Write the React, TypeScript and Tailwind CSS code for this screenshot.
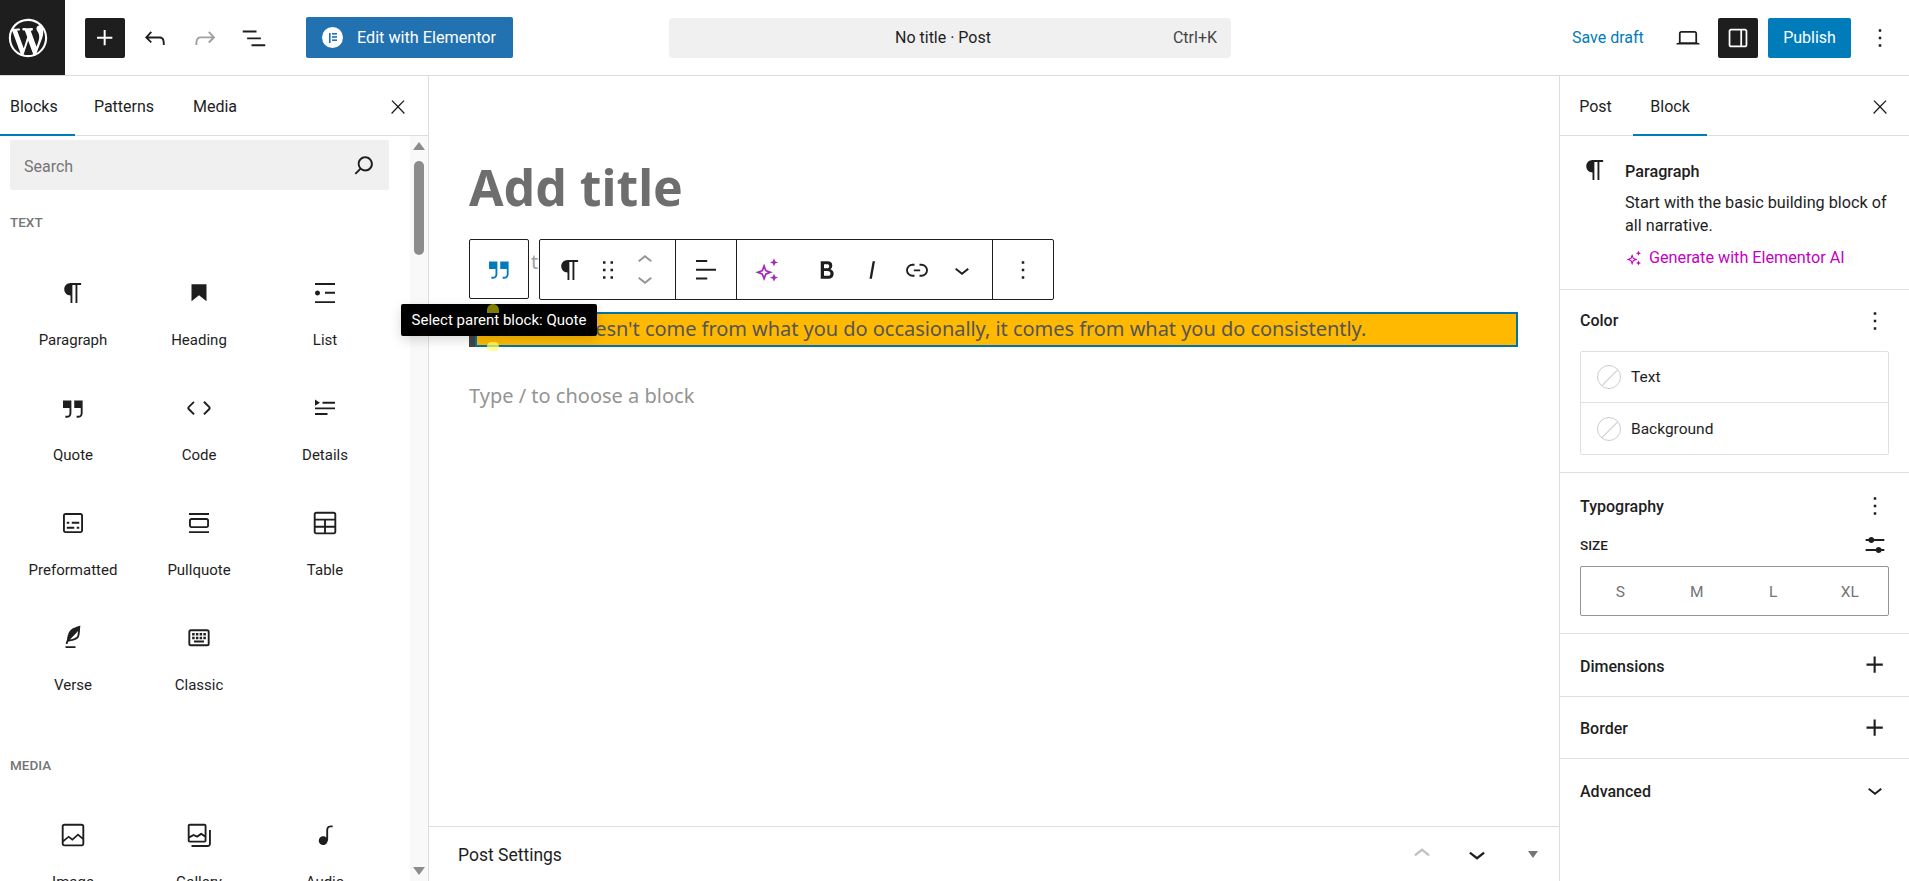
import type { ReactNode } from 'react';

const P = {
  plus: 'M11 12.5V17.5H12.5V12.5H17.5V11H12.5V6H11V11H6V12.5H11Z',
  undo: 'M18.3 11.7c-.6-.6-1.4-.9-2.3-.9H6.7l2.9-3.3-1.1-1-4.5 5L8.5 16l1-1-2.7-2.7H16c.5 0 .9.2 1.3.5 1 1 1 3.4 1 4.5v.3h1.5v-.2c0-1.5 0-4.3-1.5-5.7z',
  redo: 'M15.6 6.5l-1.1 1 2.9 3.3H8c-.9 0-1.7.3-2.3.9-1.4 1.5-1.4 4.2-1.4 5.6v.2h1.5v-.3c0-1.1 0-3.5 1-4.5.3-.3.7-.5 1.3-.5h9.2L14.5 15l1.1 1.1 4.6-4.6-4.6-5z',
  listView: 'M3 6h11v1.5H3V6Zm3.5 5.5h11V13h-11v-1.5ZM21 17H10v1.5h11V17Z',
  close: 'M13 11.8l6.1-6.3-1-1-6.1 6.2-6.1-6.2-1 1 6.1 6.3-6.5 6.7 1 1 6.5-6.6 6.5 6.6 1-1z',
  search: 'M13 5c-3.3 0-6 2.7-6 6 0 1.4.5 2.7 1.3 3.7l-3.8 3.8 1.1 1.1 3.8-3.8c1 .8 2.3 1.3 3.7 1.3 3.3 0 6-2.7 6-6S16.3 5 13 5zm0 10.5c-2.5 0-4.5-2-4.5-4.5s2-4.5 4.5-4.5 4.5 2 4.5 4.5-2 4.5-4.5 4.5z',
  paragraph: 'm9.99609 14v-.2251l.00391.0001v6.225h1.5v-14.5h2.5v14.5h1.5v-14.5h3v-1.5h-8.50391c-2.76142 0-5 2.23858-5 5 0 2.7614 2.23858 5 5 5z',
  heading: 'M6 5V18.5911L12 13.8473L18 18.5911V5H6Z',
  list: 'M4 4v1.5h16V4H4zm8 8.5h8V11h-8v1.5zM4 20h16v-1.5H4V20zm4-8c0-1.1-.9-2-2-2s-2 .9-2 2 .9 2 2 2 2-.9 2-2z',
  quote: 'M13 6v6h5.2v4c0 .8-.2 1.4-.5 1.7-.6.6-1.6.6-2.5.5h-.3v1.5h.5c1 0 2.3-.1 3.3-1 .6-.6 1-1.6 1-2.8V6H13zm-9 6h5.2v4c0 .8-.2 1.4-.5 1.7-.6.6-1.6.6-2.5.5h-.3v1.5h.5c1 0 2.3-.1 3.3-1 .6-.6 1-1.6 1-2.8V6H4v6z',
  code: 'M20.8 10.7l-4.3-4.3-1.1 1.1 4.3 4.3c.1.1.1.3 0 .4l-4.3 4.3 1.1 1.1 4.3-4.3c.7-.8.7-1.9 0-2.6zM4.2 11.8l4.3-4.3-1-1-4.3 4.3c-.7.7-.7 1.8 0 2.5l4.3 4.3 1.1-1.1-4.3-4.3c-.2-.1-.2-.3-.1-.4z',
  details: 'M4 16h10v1.5H4V16Zm0-4.5h16V13H4v-1.5ZM10 7h10v1.5H10V7ZM4 5.25l4 2.5-4 2.5v-5Z',
  preformatted: 'M18 4H6c-1.1 0-2 .9-2 2v12c0 1.1.9 2 2 2h12c1.1 0 2-.9 2-2V6c0-1.1-.9-2-2-2zm.5 14c0 .3-.2.5-.5.5H6c-.3 0-.5-.2-.5-.5V6c0-.3.2-.5.5-.5h12c.3 0 .5.2.5.5v12zM7 16.5h6V15H7v1.5zm4-4h6V11h-6v1.5zM9 11H7v1.5h2V11zm6 5.5h2V15h-2v1.5z',
  pullquote: 'M18 8H6c-1.1 0-2 .9-2 2v4c0 1.1.9 2 2 2h12c1.1 0 2-.9 2-2v-4c0-1.1-.9-2-2-2zm.5 6c0 .3-.2.5-.5.5H6c-.3 0-.5-.2-.5-.5v-4c0-.3.2-.5.5-.5h12c.3 0 .5.2.5.5v4zM4 4v1.5h16V4H4zm0 16h16v-1.5H4V20z',
  table: 'M5 3h14c1.1 0 2 .9 2 2v14c0 1.1-.9 2-2 2H5c-1.1 0-2-.9-2-2V5c0-1.1.9-2 2-2Zm0 1.5c-.3 0-.5.2-.5.5v3.5h15V5c0-.3-.2-.5-.5-.5H5ZM4.5 10v4.25h6.75V10H4.5Zm8.25 0v4.25h6.75V10h-6.75ZM4.5 15.75V19c0 .3.2.5.5.5h6.25v-3.75H4.5Zm8.25 0v3.75H19c.3 0 .5-.2.5-.5v-3.25h-6.75Z',
  verse: 'M17.8 2l-.9.3c-.1 0-3.6 1-5.2 2.1C10 5.5 9.3 6.5 8.9 7.1c-.6.9-1.7 4.7-1.7 6.3l-.9 2.3c-.2.4 0 .8.4 1 .1 0 .2.1.3.1.3 0 .6-.2.7-.5l.6-1.5c.3 0 .7-.1 1.2-.2.7-.1 1.4-.3 2.2-.5.8-.2 1.6-.5 2.4-.8.7-.3 1.4-.7 1.9-1.2s.8-1.2 1-1.9c.2-.7.3-1.6.4-2.4.1-.8.1-1.7.2-2.5 0-.8.1-1.5.2-2.1V2zm-1.9 5.6c-.1.8-.2 1.5-.3 2.1-.2.6-.4 1-.6 1.3-.3.3-.8.6-1.4.9-.7.3-1.4.5-2.2.8-.6.2-1.3.3-1.8.4L15 7.5c.3-.3.6-.7 1-1.1 0 .4 0 .8-.1 1.2zM6 20h8v-1.5H6V20z',
  classic: 'M16 15.5H8V14h8v1.5ZM8.5 13h-2v-2h2v2Zm3 0h-2v-2h2v2Zm3 0h-2v-2h2v2Zm3 0h-2v-2h2v2Zm-9-3h-2V8h2v2Zm3 0h-2V8h2v2Zm3 0h-2V8h2v2Zm3 0h-2V8h2v2ZM18.5 6.5h-13A.5.5 0 0 0 5 7v9.5a.5.5 0 0 0 .5.5h13a.5.5 0 0 0 .5-.5V7a.5.5 0 0 0-.5-.5ZM5.5 5h13a2 2 0 0 1 2 2v9.5a2 2 0 0 1-2 2h-13a2 2 0 0 1-2-2V7a2 2 0 0 1 2-2Z',
  image: 'M19 3H5c-1.105 0-2 .895-2 2v14c0 1.105.895 2 2 2h14c1.105 0 2-.895 2-2V5c0-1.105-.895-2-2-2ZM5 4.5h14c.276 0 .5.224.5.5v8.75l-3.5-3-4.5 4-3-2.25-4 3.25V5c0-.276.224-.5.5-.5Zm14 15H5c-.276 0-.5-.224-.5-.5v-1.5l4-3.25 3 2.25 4.5-4 3.5 3V19c0 .276-.224.5-.5.5Z',
  gallery: 'M16.375 4.5H4.625a.125.125 0 0 0-.125.125v8.254l2.859-1.54a.75.75 0 0 1 .68-.016l2.384 1.142 2.89-2.074a.75.75 0 0 1 .874 0l2.313 1.66V4.625a.125.125 0 0 0-.125-.125Zm.125 9.398-2.75-1.975-2.813 2.02a.75.75 0 0 1-.76.067l-2.444-1.17L4.5 14.583v1.792c0 .069.056.125.125.125h11.75a.125.125 0 0 0 .125-.125v-2.477ZM4.625 3C3.728 3 3 3.728 3 4.625v11.75C3 17.273 3.728 18 4.625 18h11.75c.898 0 1.625-.727 1.625-1.625V4.625C18 3.728 17.273 3 16.375 3H4.625ZM20 8v11c0 .69-.31 1-.999 1H6v1.5h13.001c1.52 0 2.499-.982 2.499-2.5V8H20Z',
  audio: 'M17.7 4.3c-1.2 0-2.8 0-3.8 1-.6.6-.9 1.5-.9 2.6V14c-.6-.6-1.5-1-2.5-1C8.6 13 7 14.6 7 16.5S8.6 20 10.5 20c1.5 0 2.8-1 3.3-2.3.5-.8.7-1.8.7-2.7V7.9c0-.7.2-1.2.5-1.6.6-.6 1.8-.6 2.8-.6h.3V4.3h-.6z',
  more: 'M13 19h-2v-2h2v2zm0-6h-2v-2h2v2zm0-6h-2V5h2v2z',
  drag: 'M8 7h2V5H8v2zm0 6h2v-2H8v2zm0 6h2v-2H8v2zm6-14v2h2V5h-2zm0 8h2v-2h-2v2zm0 6h2v-2h-2v2z',
  up: 'M6.5 12.4L12 8l5.5 4.4-.9 1.2L12 10l-4.5 3.6-1-1.2z',
  down: 'M17.5 11.6L12 16l-5.5-4.4.9-1.2L12 14l4.5-3.6 1 1.2z',
  align: 'M13 5.5H4V4h9v1.5Zm7 7H4V11h16v1.5Zm-7 7H4V18h9v1.5Z',
  link: 'M10 17.389H8.444A5.194 5.194 0 1 1 8.444 7H10v1.5H8.444a3.694 3.694 0 0 0 0 7.389H10v1.5ZM14 7h1.556a5.194 5.194 0 0 1 0 10.39H14v-1.5h1.556a3.694 3.694 0 0 0 0-7.39H14V7Zm-4.5 6h5v-1.5h-5V13Z',
  bold: 'M14.7 11.3c1-.6 1.5-1.6 1.5-3 0-2.3-1.3-3.4-4-3.4H7v14h5.8c1.4 0 2.5-.3 3.3-1 .8-.7 1.2-1.7 1.2-2.9.1-1.9-.8-3.1-2.6-3.7zm-5.1-4h2.3c.6 0 1.1.1 1.4.4.3.3.5.7.5 1.2s-.2 1-.5 1.2c-.3.3-.8.4-1.4.4H9.6V7.3zm4.6 9c-.4.3-1 .4-1.7.4H9.6v-3.9h2.9c.7 0 1.3.2 1.7.5.4.3.6.8.6 1.5s-.2 1.2-.6 1.5z',
  italic: 'M12.5 5L10 19h1.9l2.5-14z',
  drawer: 'M18 4H6c-1.1 0-2 .9-2 2v12c0 1.1.9 2 2 2h12c1.1 0 2-.9 2-2V6c0-1.1-.9-2-2-2zm-4 14.5H6c-.3 0-.5-.2-.5-.5V6c0-.3.2-.5.5-.5h8v13zm4.5-.5c0 .3-.2.5-.5.5h-2.5v-13H18c.3 0 .5.2.5.5v12z',
  laptop: 'M20.5 16h-.7V8c0-1.1-.9-2-2-2H6.2c-1.1 0-2 .9-2 2v8h-.7c-.8 0-1.5.7-1.5 1.5h20c0-.8-.7-1.5-1.5-1.5zM5.7 8c0-.3.2-.5.5-.5h11.6c.3 0 .5.2.5.5v7.6H5.7V8z',
  sliders: 'M19 7.5h-7.628c-.3089-.87389-1.1423-1.5-2.122-1.5-.97966 0-1.81309.62611-2.12197 1.5H5v1.5h2.12803c.30888.87389 1.14231 1.5 2.12197 1.5.9797 0 1.8131-.62611 2.122-1.5H19V7.5ZM19 15h-2.128c-.3089-.8739-1.1423-1.5-2.122-1.5s-1.8131.6261-2.122 1.5H5v1.5h7.628c.3089.8739 1.1423 1.5 2.122 1.5s1.8131-.6261 2.122-1.5H19V15Z',
  sparkle: 'M9.5 6.5 11.6 12l5.4 2-5.4 2-2.1 5.5L7.4 16 2 14l5.4-2 2.1-5.5Zm0 4.2-.9 2.3-2.3 1 2.3.9.9 2.4.9-2.4 2.3-.9-2.3-1-.9-2.3ZM18 2l1 2.5 2.5 1-2.5 1L18 9l-1-2.5-2.5-1 2.5-1L18 2Zm0 13 1 2.5 2.5 1-2.5 1L18 22l-1-2.5-2.5-1 2.5-1 1-2.5Z',
  wp: 'M20 10c0-5.51-4.49-10-10-10C4.48 0 0 4.49 0 10c0 5.52 4.48 10 10 10 5.51 0 10-4.48 10-10zM7.78 15.37L4.37 6.22c.55-.02 1.17-.08 1.17-.08.5-.06.44-1.13-.06-1.11 0 0-1.45.11-2.37.11-.18 0-.37 0-.58-.01C4.12 2.69 6.87 1.11 10 1.11c2.33 0 4.45.87 6.05 2.34-.68-.11-1.65.39-1.65 1.58 0 .74.45 1.36.9 2.1.35.61.55 1.36.55 2.46 0 1.49-1.4 5-1.4 5l-3.03-8.37c.54-.02.82-.17.82-.17.5-.05.44-1.25-.06-1.22 0 0-1.44.12-2.38.12-.87 0-2.33-.12-2.33-.12-.5-.03-.56 1.2-.06 1.22l.92.08 1.26 3.41zM17.41 10c.24-.64.74-1.87.43-4.25.7 1.29 1.05 2.71 1.05 4.25 0 3.29-1.73 6.24-4.4 7.78.97-2.59 1.94-5.2 2.92-7.78zM6.1 18.09C3.12 16.65 1.11 13.53 1.11 10c0-1.3.23-2.48.72-3.59C3.25 10.3 4.67 14.2 6.1 18.09zm4.03-6.63l2.58 6.98c-.86.29-1.76.45-2.71.45-.79 0-1.57-.11-2.29-.33.81-2.38 1.62-4.74 2.42-7.1z',
};

const Icon = ({ d, className = 'w-[30px] h-[30px]', box = '0 0 24 24' }: { d: string; className?: string; box?: string }) => (
  <svg viewBox={box} className={`fill-current shrink-0 ${className}`}>
    <path d={d} fillRule="evenodd" />
  </svg>
);

const BlockItem = ({ d, label }: { d: string; label: string }) => (
  <div className="h-[115px] pt-[17px] flex flex-col items-center">
    <Icon d={d} className="w-[30px] h-[30px] text-[#1e1e1e]" />
    <div className="mt-[22px] text-[15px] leading-5 text-[#1e1e1e]">{label}</div>
  </div>
);

const textBlocks = [
  [P.paragraph, 'Paragraph'],
  [P.heading, 'Heading'],
  [P.list, 'List'],
  [P.quote, 'Quote'],
  [P.code, 'Code'],
  [P.details, 'Details'],
  [P.preformatted, 'Preformatted'],
  [P.pullquote, 'Pullquote'],
  [P.table, 'Table'],
  [P.verse, 'Verse'],
  [P.classic, 'Classic'],
];

const mediaBlocks = [
  [P.image, 'Image'],
  [P.gallery, 'Gallery'],
  [P.audio, 'Audio'],
];

const Inserter = () => (
  <aside className="w-[429px] shrink-0 border-r border-[#dddddd] flex flex-col overflow-hidden">
    <div className="h-[60px] shrink-0 border-b border-[#dddddd] flex text-[16px] text-[#1e1e1e] relative">
      <div className="w-[75px] pl-[10px] pt-[2px] flex items-center relative">
        Blocks
        <div className="absolute left-0 right-0 -bottom-px h-[2px] bg-[#007cba]" />
      </div>
      <div className="w-[98px] pt-[2px] flex items-center justify-center">Patterns</div>
      <div className="w-[84px] pt-[2px] flex items-center justify-center">Media</div>
      <Icon d={P.close} className="w-[22px] h-[22px] ml-auto mr-[19px] mt-[20px]" />
    </div>
    <div className="flex flex-1 min-h-0">
      <div className="w-[410px] pl-[10px] overflow-hidden">
        <div className="mt-[4px] h-[50px] w-[379px] bg-[#f0f0f0] rounded-[2px] flex items-center pl-[14px] pr-[10px] text-[16px] text-[#757575]">
          <span className="pt-[3px]">Search</span>
          <Icon d={P.search} className="w-[30px] h-[30px] ml-auto text-[#1e1e1e]" />
        </div>
        <div className="mt-[24px] h-4 text-[13.5px] leading-4 font-medium uppercase text-[#757575]">Text</div>
        <div className="mt-[31px] grid grid-cols-3 w-[378px]">
          {textBlocks.map(([d, label]) => (
            <BlockItem key={label} d={d} label={label} />
          ))}
        </div>
        <div className="mt-[36px] h-4 text-[13.5px] leading-4 font-medium uppercase text-[#757575]">Media</div>
        <div className="mt-[30px] grid grid-cols-3 w-[378px]">
          {mediaBlocks.map(([d, label]) => (
            <BlockItem key={label} d={d} label={label} />
          ))}
        </div>
      </div>
      {/* scrollbar */}
      <div className="w-[18px] bg-[#f9f9f9] flex flex-col items-center">
        <div className="mt-[6px] w-0 h-0 border-x-[6px] border-x-transparent border-b-[8px] border-b-[#8c8c8c]" />
        <div className="mt-[11px] w-[10px] h-[94px] rounded-full bg-[#8c8c8c]" />
        <div className="mt-auto mb-[6px] w-0 h-0 border-x-[6px] border-x-transparent border-t-[8px] border-t-[#8c8c8c]" />
      </div>
    </div>
  </aside>
);

const ToolButton = ({ d, w }: { d: string; w: string }) => (
  <div className={`h-full flex items-center justify-center ${w}`}>
    <Icon d={d} />
  </div>
);

const BlockToolbar = () => (
  <div className="flex h-[61px] mt-[22px] text-[#1e1e1e]">
    <div className="w-[60px] h-[60px] border border-[#1e1e1e] rounded-[2px] flex items-center justify-center text-[#007cba]">
      <Icon d={P.quote} />
    </div>
    <div className="w-[10px] pl-[2px] text-[20px] leading-[46px] text-[#a0a0a0]">t</div>
    <div className="w-[515px] border border-[#1e1e1e] rounded-[2px] flex bg-white">
      <div className="flex w-[136px] pl-2 border-r border-[#1e1e1e]">
        <ToolButton d={P.paragraph} w="w-[44px]" />
        <ToolButton d={P.drag} w="w-[32px]" />
        <div className="w-[42px] flex flex-col items-center justify-center text-[#949494] -space-y-[11px]">
          <Icon d={P.up} />
          <Icon d={P.down} />
        </div>
      </div>
      <div className="w-[61px] border-r border-[#1e1e1e]">
        <ToolButton d={P.align} w="w-full" />
      </div>
      <div className="flex w-[256px] border-r border-[#1e1e1e]">
        <div className="w-[60px] h-full flex items-center justify-center text-[#a22cb5]">
          <Icon d={P.sparkle} className="w-[28px] h-[28px]" />
        </div>
        <ToolButton d={P.bold} w="w-[60px]" />
        <ToolButton d={P.italic} w="w-[30px]" />
        <ToolButton d={P.link} w="w-[60px]" />
        <ToolButton d={P.down} w="w-[30px]" />
      </div>
      <ToolButton d={P.more} w="w-[60px]" />
    </div>
  </div>
);

const Editor = () => (
  <main className="flex-1 min-w-0 flex flex-col">
    <div className="flex-1 pl-10 pr-[41px] pt-[81px] font-['Noto_Sans',sans-serif]">
      <div className="h-[60px] text-[50px] leading-[60px] font-bold text-[#6e6e6e]">Add title</div>
      <BlockToolbar />
      <div className="relative mt-[12px] h-[35px] flex bg-[#ffb900] border-l-[6px] border-[#444444]">
        <div className="flex-1 border-2 border-[#0073aa] pl-4 text-[20px] leading-[29px] tracking-[-0.04px] text-[#555555] whitespace-nowrap">
          Success doesn't come from what you do occasionally, it comes from what you do consistently.
        </div>
        <div className="absolute z-10 left-[-74px] top-[-8px] w-[196px] h-[32px] rounded-[2px] bg-black shadow-[0_4px_12px_rgba(0,0,0,0.15)] flex items-center justify-center text-[15px] text-white whitespace-nowrap font-['Roboto',sans-serif]">
          Select parent block: Quote
        </div>
        <div className="absolute z-20 left-[12px] top-[-8px] w-3 h-[9px] rounded-t-full bg-[#ffff00]/50" />
        <div className="absolute z-20 left-[12px] top-[30px] w-3 h-[9px] rounded-full bg-[#ffff66]/70" />
      </div>
      <div className="mt-[35px] h-7 text-[20px] leading-7 text-[#949494]">Type / to choose a block</div>
    </div>
    <div className="h-[55px] shrink-0 border-t border-[#dddddd] flex items-center text-[#1e1e1e]">
      <span className="ml-[29px] pt-[2px] text-[17.5px] font-normal">Post Settings</span>
      <Icon d={P.up} className="w-[34px] h-[34px] ml-auto text-[#c0c0c0]" />
      <Icon d={P.down} className="w-[34px] h-[34px] ml-[21px]" />
      <div className="ml-[34px] mr-[21px] w-0 h-0 border-x-[5px] border-x-transparent border-t-[7px] border-t-[#72777c]" />
    </div>
  </main>
);

const PanelSection = ({ children }: { children: ReactNode }) => (
  <section className="border-b border-[#e0e0e0] px-5">{children}</section>
);

const SectionRow = ({ title, h }: { title: string; h: string }) => (
  <PanelSection>
    <div className={`flex items-center justify-between text-[16px] font-medium text-[#1e1e1e] ${h}`}>
      <span className="pt-[3px]">{title}</span>
      <Icon d={P.plus} className="w-[34px] h-[34px] -mr-[3px]" />
    </div>
  </PanelSection>
);

const Swatch = () => (
  <span className="w-6 h-6 rounded-full border border-[#cccccc] relative overflow-hidden shrink-0">
    <span className="absolute left-1/2 top-[-2px] h-[28px] w-px bg-[#cccccc] rotate-45" />
  </span>
);

const ColorRow = ({ label, last }: { label: string; last?: boolean }) => (
  <div className={`h-[51px] flex items-center pl-4 gap-[10px] text-[15.5px] ${last ? '' : 'border-b border-[#e0e0e0]'}`}>
    <Swatch />
    <span className="pt-[2px]">{label}</span>
  </div>
);

const Sidebar = () => (
  <aside className="w-[350px] shrink-0 border-l border-[#dddddd] text-[#1e1e1e] text-[16px]">
    <div className="h-[60px] border-b border-[#dddddd] flex">
      <div className="w-[71px] pt-[2px] flex items-center justify-center">Post</div>
      <div className="ml-[2px] w-[74px] pt-[2px] flex items-center justify-center relative">
        Block
        <div className="absolute left-0 right-0 -bottom-px h-[2px] bg-[#007cba]" />
      </div>
      <Icon d={P.close} className="w-[22px] h-[22px] ml-auto mr-[18px] mt-[20px]" />
    </div>
    <div className="h-[154px] border-b border-[#e0e0e0] flex pl-[20px] pt-[19px] text-[16.2px]">
      <Icon d={P.paragraph} />
      <div className="ml-[15px] pt-[7px]">
        <div className="font-medium leading-5">Paragraph</div>
        <div className="mt-[9px] w-[275px] leading-[23px]">Start with the basic building block of all narrative.</div>
        <div className="mt-[11px] flex items-center gap-[6px] text-[#c400c4] leading-5">
          <Icon d={P.sparkle} className="w-[18px] h-[18px]" />
          Generate with Elementor AI
        </div>
      </div>
    </div>
    <PanelSection>
      <div className="h-[61px] flex items-center justify-between font-medium">
        Color
        <Icon d={P.more} className="w-[30px] h-[30px] -mr-px" />
      </div>
      <div className="border border-[#e0e0e0] rounded-[2px] mb-[17px]">
        <ColorRow label="Text" />
        <ColorRow label="Background" last />
      </div>
    </PanelSection>
    <PanelSection>
      <div className="h-[65px] flex items-center justify-between font-medium">
        <span className="pt-[2px]">Typography</span>
        <Icon d={P.more} className="w-[30px] h-[30px] -mr-px" />
      </div>
      <div className="-mt-[5px] h-6 flex items-center justify-between text-[13.5px] font-medium">
        SIZE
        <Icon d={P.sliders} className="w-[32px] h-[32px] -mr-[2px]" />
      </div>
      <div className="mt-[9px] mb-[17px] h-[50px] pt-[3px] pl-px border border-[#949494] rounded-[2px] grid grid-cols-4 items-center text-center text-[15.5px] text-[#757575]">
        <span>S</span>
        <span>M</span>
        <span>L</span>
        <span>XL</span>
      </div>
    </PanelSection>
    <SectionRow title="Dimensions" h="h-[62px]" />
    <SectionRow title="Border" h="h-[61px]" />
    <div className="px-5 h-[62px] flex items-center justify-between text-[16px] font-medium">
      <span className="pt-[3px]">Advanced</span>
      <Icon d={P.down} className="w-[30px] h-[30px] -mr-px" />
    </div>
  </aside>
);

const TopBar = () => (
  <header className="h-[76px] shrink-0 border-b border-[#dddddd] flex items-center text-[#1e1e1e]">
    <div className="w-[65px] h-[75px] pr-[10px] bg-[#1e1e1e] flex items-center justify-center text-white">
      <Icon d={P.wp} box="-2 -2 24 24" className="w-[46px] h-[46px]" />
    </div>
    <div className="ml-5 w-10 h-10 rounded-[2px] bg-[#1e1e1e] text-white flex items-center justify-center">
      <Icon d={P.plus} className="w-[32px] h-[32px]" />
    </div>
    <div className="ml-[10px] w-10 flex justify-center">
      <Icon d={P.undo} />
    </div>
    <div className="ml-[10px] w-10 flex justify-center text-[#a0a0a0]">
      <Icon d={P.redo} />
    </div>
    <div className="ml-[9px] w-10 flex justify-center">
      <Icon d={P.listView} />
    </div>
    <div className="ml-8 w-[207px] h-[41px] rounded-[2px] bg-[#2271b1] text-white flex items-center pl-4 gap-[14px] text-[16.2px] font-normal">
      <span className="w-[21px] h-[21px] rounded-full bg-white flex items-center justify-center">
        <svg viewBox="0 0 12 12" className="w-3 h-3 fill-[#2271b1]">
          <rect x="2" y="1" width="1.6" height="10" />
          <rect x="5" y="1" width="5" height="1.6" />
          <rect x="5" y="4.2" width="5" height="1.6" />
          <rect x="5" y="7.4" width="5" height="1.6" />
        </svg>
      </span>
      <span className="pt-[2px]">Edit with Elementor</span>
    </div>
    <div className="ml-[156px] w-[562px] h-10 rounded-[4px] bg-[#f0f0f0] flex items-center text-[16px]">
      <span className="ml-[226px]">No title · Post</span>
      <span className="ml-auto mr-[14px] text-[#444444]">Ctrl+K</span>
    </div>
    <span className="ml-[341px] w-[72px] text-[16px] text-[#007cba] whitespace-nowrap">Save draft</span>
    <div className="ml-6 w-10 flex justify-center">
      <Icon d={P.laptop} className="w-7 h-7" />
    </div>
    <div className="ml-[10px] w-10 h-10 rounded-[2px] bg-[#1e1e1e] text-white flex items-center justify-center">
      <Icon d={P.drawer} className="w-7 h-7" />
    </div>
    <div className="ml-[10px] w-[83px] h-10 rounded-[2px] bg-[#007cba] text-white flex items-center justify-center text-[16px] font-normal">
      Publish
    </div>
    <div className="ml-[9px] w-10 flex justify-center">
      <Icon d={P.more} />
    </div>
  </header>
);

export default function App() {
  return (
    <div className="h-[881px] w-[1909px] overflow-hidden flex flex-col bg-white font-['Roboto',sans-serif]">
      <TopBar />
      <div className="flex flex-1 min-h-0">
        <Inserter />
        <Editor />
        <Sidebar />
      </div>
    </div>
  );
}
